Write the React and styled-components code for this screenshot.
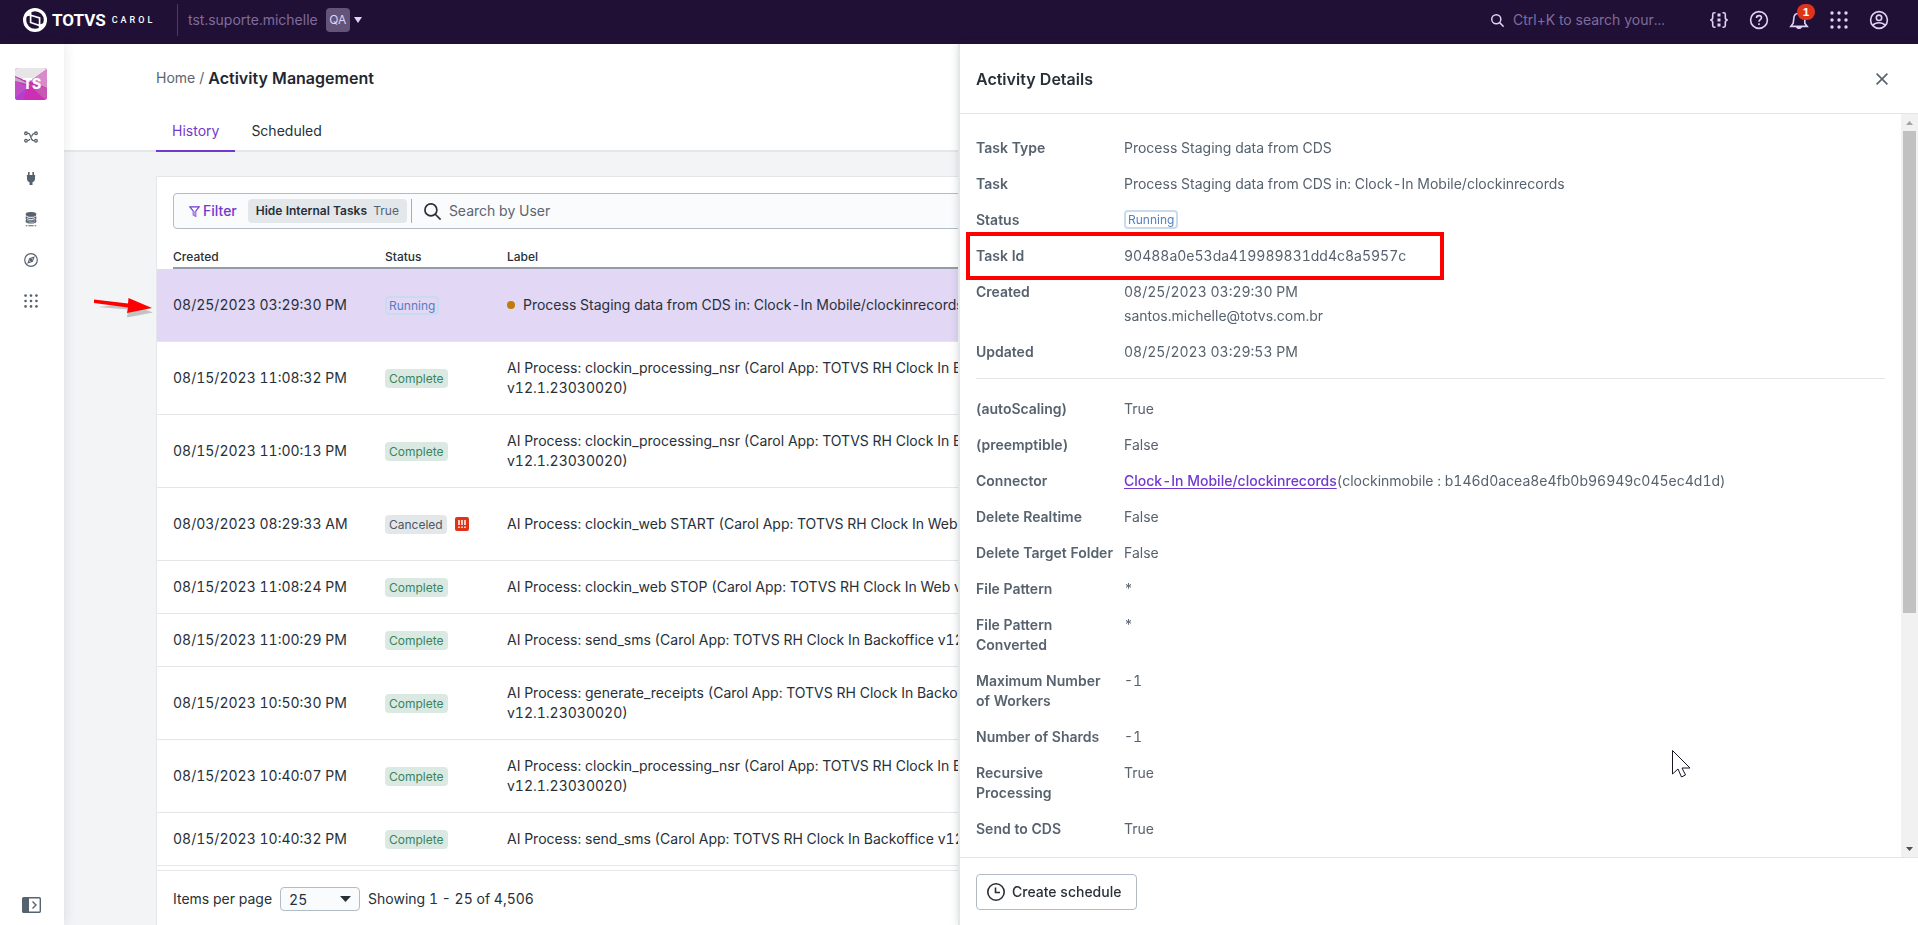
import React, { useState } from "react";
import styled, { createGlobalStyle, css } from "styled-components";

const GlobalStyle = createGlobalStyle`
  * {
    box-sizing: border-box;
  }

  body {
    margin: 0;
    background: #f2f4f6;
    color: #273039;
    font-family: Inter, "Liberation Sans", sans-serif;
    font-size: 14px;
    font-variant-numeric: tabular-nums;
    line-height: 20px;
  }

  button,
  input,
  select {
    font: inherit;
    font-variant-numeric: inherit;
    color: inherit;
  }
`;

const Page = styled.div`
  position: relative;
  display: flex;
  flex-direction: column;
  height: 100vh;
  overflow: hidden;
`;

const TopBar = styled.header`
  display: flex;
  flex: none;
  align-items: center;
  height: 44px;
  padding: 0 19px 4px 23px;
  background: #201036;
  color: #dfd2f6;
`;

const Brand = styled.a`
  display: flex;
  align-items: center;
  width: 154px;
  color: #ffffff;
  text-decoration: none;
`;

const BrandName = styled.span`
  margin-left: 5px;
  font-family: Roboto, sans-serif;
  font-size: 17px;
  font-weight: 700;
`;

const BrandProduct = styled.span`
  margin-left: 6px;
  font-family: Roboto, sans-serif;
  font-size: 9px;
  font-weight: 500;
  letter-spacing: 3px;
`;

const TenantButton = styled.button`
  display: flex;
  align-items: center;
  height: 32px;
  padding: 0 10px;
  border: none;
  border-left: 1px solid #4a3b60;
  background: none;
  color: #7f6c9c;
  cursor: pointer;

  svg {
    margin-left: 4px;
    color: #dfd2f6;
  }
`;

const EnvTag = styled.span`
  width: 24px;
  margin-left: 8px;
  border-radius: 4px;
  background: #64547a;
  color: #dfd2f6;
  font-size: 12px;
  line-height: 24px;
  text-align: center;
`;

const GlobalSearch = styled.label`
  display: flex;
  align-items: center;
  gap: 9px;
  margin-left: auto;
  margin-right: 18px;
`;

const GlobalSearchInput = styled.input`
  width: 168px;
  padding: 0;
  border: none;
  outline: none;
  background: none;

  &::placeholder {
    color: #7f6c9c;
    opacity: 1;
  }
`;

const IconButton = styled.button`
  position: relative;
  display: flex;
  align-items: center;
  justify-content: center;
  width: ${(props) => props.$width ?? 24}px;
  height: 24px;
  padding: 0;
  border: none;
  background: none;
  cursor: pointer;
`;

const TopActions = styled.nav`
  display: flex;
`;

const Notification = styled.span`
  position: absolute;
  top: -4px;
  right: 4px;
  width: 18px;
  border-radius: 8px;
  background: #e0341a;
  color: #ffffff;
  font-size: 11px;
  font-weight: 700;
  line-height: 16px;
  text-align: center;
`;

const Body = styled.div`
  display: flex;
  flex: 1;
  min-height: 0;
`;

const Sidebar = styled.nav`
  z-index: 1;
  display: flex;
  flex: none;
  flex-direction: column;
  align-items: center;
  width: 64px;
  padding: 24px 2px 8px 0;
  background: #ffffff;
  box-shadow: 0 0 12px rgba(32, 41, 50, 0.12);
`;

const SideLink = styled.a`
  display: flex;
  align-items: center;
  justify-content: center;
  width: 32px;
  height: 24px;
  margin-bottom: 17px;
  color: #57626f;

  &:last-child {
    margin: auto 0 0;
  }
`;

const TenantLogo = styled.a`
  width: 32px;
  height: 32px;
  margin-bottom: 25px;
`;

const Content = styled.main`
  display: flex;
  flex: 1;
  flex-direction: column;
  min-width: 0;
`;

const PageHead = styled.div`
  padding: 24px 92px 0;
  border-bottom: 2px solid #e3e7ea;
  background: #ffffff;
`;

const Breadcrumb = styled.div`
  display: flex;
  align-items: center;
  gap: 4px;
  color: #5b6570;

  a {
    color: inherit;
    text-decoration: none;
  }
`;

const PageTitle = styled.h1`
  margin: 0;
  color: #1f2830;
  font-size: 16px;
  font-weight: 600;
  line-height: 20px;
`;

const Tabs = styled.div`
  display: flex;
  margin: 22px 0 -2px;
`;

const Tab = styled.button`
  height: 42px;
  padding: 2px 16px 0;
  border: none;
  border-bottom: 2px solid transparent;
  background: none;
  cursor: pointer;

  ${(props) =>
    props.$active &&
    css`
      border-color: #7239cf;
      color: #7239cf;
    `}
`;

const Card = styled.section`
  display: flex;
  flex: 1;
  flex-direction: column;
  min-height: 0;
  margin: 24px 92px 0;
  border: 1px solid #e3e7ea;
  border-bottom: none;
  background: #ffffff;
`;

const FilterBar = styled.div`
  display: flex;
  flex: none;
  align-items: center;
  height: 36px;
  margin: 16px 16px 0;
  padding: 0 15px;
  border: 1px solid #b2bcc6;
  border-radius: 4px;
  background: #fafbfd;
`;

const FilterButton = styled.button`
  display: flex;
  align-items: center;
  gap: 3px;
  padding: 0;
  border: none;
  background: none;
  color: #7239cf;
  font-weight: 500;
  cursor: pointer;
`;

const FilterChip = styled.span`
  margin: 0 4px 0 11px;
  padding: 0 8px;
  border-radius: 4px;
  background: #e3e7ea;
  color: #57626f;
  font-size: 12px;
  line-height: 24px;

  strong {
    margin-right: 3px;
    color: #273039;
    font-weight: 600;
  }
`;

const UserSearch = styled.label`
  display: flex;
  flex: 1;
  align-items: center;
  gap: 8px;
  height: 24px;
  padding-left: 12px;
  border-left: 1px solid #a3adb7;
`;

const UserSearchInput = styled.input`
  flex: 1;
  padding: 0;
  border: none;
  outline: none;
  background: none;

  &::placeholder {
    color: #5b6570;
    opacity: 1;
  }
`;

const TableArea = styled.div`
  flex: 1;
  min-height: 0;
  overflow: hidden;
`;

const Table = styled.table`
  width: 100%;
  border-collapse: separate;
  border-spacing: 0;
  table-layout: fixed;
`;

const HeadCell = styled.th`
  width: ${(props) => props.$width};
  padding: 0;
  font-size: 12px;
  font-weight: 500;
  text-align: left;

  &:first-child {
    padding-left: 16px;
  }

  div {
    height: 40px;
    padding-top: 18px;
    border-bottom: 2px solid #929da7;
  }
`;

const Row = styled.tr`
  height: ${(props) => (props.$tall ? 73 : 53)}px;
  background: ${(props) => (props.$selected ? "#e2d7f5" : "#ffffff")};
  cursor: pointer;
`;

const Cell = styled.td`
  padding: 0;
  border-bottom: 1px solid #e3e7ea;

  &:first-child {
    padding-left: 16px;
  }
`;

const CellInner = styled.div`
  display: flex;
  align-items: center;
`;

const badgeTones = {
  Complete: css`
    background: #daeae3;
    color: #39845f;
  `,
  Canceled: css`
    background: #e3e7ea;
    color: #4d5762;
  `,
  Running: css`
    border: 2px solid #c9dbef;
    padding: 0 2px;
    color: #5580bf;
    line-height: 15px;
  `,
};

const Badge = styled.span`
  display: inline-block;
  padding: 0 4px;
  border-radius: 4px;
  font-size: 12px;
  line-height: 19px;
  ${(props) => badgeTones[props.$tone]}
`;

const AlertMark = styled.svg`
  margin-left: 8px;
`;

const Dot = styled.span`
  width: 8px;
  height: 8px;
  margin-right: 8px;
  border-radius: 50%;
  background: #c07c08;
`;

const Pager = styled.footer`
  display: flex;
  flex: none;
  align-items: flex-start;
  gap: 8px;
  height: 55px;
  padding: 16px;
  border-top: 1px solid #e3e7ea;
  line-height: 24px;

  label {
    display: flex;
    align-items: center;
    gap: 8px;
  }
`;

const SelectBox = styled.span`
  position: relative;
  display: flex;

  svg {
    position: absolute;
    top: 9px;
    right: 9px;
    pointer-events: none;
  }
`;

const Select = styled.select`
  appearance: none;
  width: 80px;
  height: 24px;
  padding: 0 8px;
  border: 1px solid #b2bcc6;
  border-radius: 4px;
  background: #fafbfd;
`;

const Drawer = styled.aside`
  position: fixed;
  z-index: 2;
  top: 44px;
  right: 0;
  bottom: 0;
  display: flex;
  flex-direction: column;
  width: calc(50% + 1px);
  border-left: 2px solid #e3e7ea;
  background: #ffffff;
  box-shadow: 0 0 8px rgba(32, 41, 50, 0.16);
  color: #57626f;
`;

const DrawerHead = styled.div`
  display: flex;
  flex: none;
  align-items: center;
  justify-content: space-between;
  height: 70px;
  padding: 0 24px 0 16px;
  border-bottom: 1px solid #e3e6e8;

  h2 {
    margin: 0;
    color: #273039;
    font-size: 16px;
    font-weight: 600;
  }
`;

const DrawerBody = styled.div`
  display: flex;
  flex: 1;
  min-height: 0;
`;

const Details = styled.div`
  flex: 1;
  padding: 24px 16px 0;
  overflow: hidden;
`;

const DetailList = styled.dl`
  display: flex;
  flex-direction: column;
  gap: 16px;
  margin: 0;

  & + & {
    margin-top: 16px;
    padding-top: 20px;
    border-top: 1px solid #e3e6e8;
  }
`;

const DetailRow = styled.div`
  position: relative;
  display: grid;
  grid-template-columns: 140px 1fr;
  column-gap: 8px;

  dt {
    font-weight: 600;
  }

  dd {
    display: flex;
    flex-direction: column;
    align-items: flex-start;
    gap: 4px;
    margin: 0;
  }

  a {
    color: #7239cf;
    font-weight: 500;
    text-underline-offset: 2px;
  }
`;

const Outline = styled.span`
  position: absolute;
  top: -14px;
  left: -10px;
  width: 478px;
  height: 48px;
  border: 4px solid #fe0000;
  pointer-events: none;
`;

const Scrollbar = styled.div`
  display: flex;
  flex: none;
  flex-direction: column;
  align-items: center;
  width: 17px;
  background: #f1f1f1;
`;

const ScrollArrow = styled.button`
  display: flex;
  align-items: center;
  justify-content: center;
  width: 17px;
  height: 17px;
  padding: 0;
  border: none;
  background: none;
  color: ${(props) => (props.$muted ? "#a3a3a3" : "#505050")};
`;

const ScrollTrack = styled.div`
  flex: 1;
`;

const ScrollThumb = styled.div`
  width: 13px;
  height: 68%;
  background: #c1c1c1;
`;

const DrawerFoot = styled.div`
  flex: none;
  height: 68px;
  padding: 16px;
  border-top: 1px solid #e3e6e8;
`;

const ScheduleButton = styled.button`
  display: flex;
  align-items: center;
  gap: 7px;
  height: 36px;
  padding: 0 15px 0 10px;
  border: 1px solid #b2bcc6;
  border-radius: 4px;
  background: #ffffff;
  color: #273039;
  font-weight: 500;
  cursor: pointer;
`;

const PointerArrow = styled.svg`
  position: absolute;
  z-index: 1;
  top: 296px;
  left: 92px;
`;

const MouseCursor = styled.svg`
  position: fixed;
  z-index: 3;
  right: 227px;
  bottom: 147px;
  pointer-events: none;
`;

const rows = [
  {
    created: "08/25/2023 03:29:30 PM",
    status: "Running",
    label: "Process Staging data from CDS in: Clock-In Mobile/clockinrecords",
    dot: true,
    tall: true,
  },
  {
    created: "08/15/2023 11:08:32 PM",
    status: "Complete",
    label:
      "AI Process: clockin_processing_nsr (Carol App: TOTVS RH Clock In Backoffice v12.1.23030020)",
    tall: true,
  },
  {
    created: "08/15/2023 11:00:13 PM",
    status: "Complete",
    label:
      "AI Process: clockin_processing_nsr (Carol App: TOTVS RH Clock In Backoffice v12.1.23030020)",
    tall: true,
  },
  {
    created: "08/03/2023 08:29:33 AM",
    status: "Canceled",
    label: "AI Process: clockin_web START (Carol App: TOTVS RH Clock In Web v12)",
    alert: true,
    tall: true,
  },
  {
    created: "08/15/2023 11:08:24 PM",
    status: "Complete",
    label: "AI Process: clockin_web STOP (Carol App: TOTVS RH Clock In Web v12)",
  },
  {
    created: "08/15/2023 11:00:29 PM",
    status: "Complete",
    label: "AI Process: send_sms (Carol App: TOTVS RH Clock In Backoffice v12)",
  },
  {
    created: "08/15/2023 10:50:30 PM",
    status: "Complete",
    label:
      "AI Process: generate_receipts (Carol App: TOTVS RH Clock In Backoffice v12.1.23030020)",
    tall: true,
  },
  {
    created: "08/15/2023 10:40:07 PM",
    status: "Complete",
    label:
      "AI Process: clockin_processing_nsr (Carol App: TOTVS RH Clock In Backoffice v12.1.23030020)",
    tall: true,
  },
  {
    created: "08/15/2023 10:40:32 PM",
    status: "Complete",
    label: "AI Process: send_sms (Carol App: TOTVS RH Clock In Backoffice v12)",
  },
];

const settings = [
  ["(autoScaling)", "True"],
  ["(preemptible)", "False"],
  [
    "Connector",
    <span key="connector">
      <a href="#connector">Clock-In Mobile/clockinrecords</a>
      (clockinmobile : b146d0acea8e4fb0b96949c045ec4d1d)
    </span>,
  ],
  ["Delete Realtime", "False"],
  ["Delete Target Folder", "False"],
  ["File Pattern", "*"],
  ["File Pattern Converted", "*"],
  ["Maximum Number of Workers", "-1"],
  ["Number of Shards", "-1"],
  ["Recursive Processing", "True"],
  ["Send to CDS", "True"],
];

function Caret({ width = 8, height = 6, up }) {
  return (
    <svg width={width} height={height} viewBox="0 0 8 6" preserveAspectRatio="none">
      <path d={up ? "M0 6h8L4 0z" : "M0 0h8L4 6z"} fill="currentColor" />
    </svg>
  );
}

function SearchIcon({ size, stroke }) {
  return (
    <svg width={size} height={size} viewBox="0 0 16 16" fill="none" stroke="currentColor" strokeWidth={stroke}>
      <circle cx="6.5" cy="6.5" r="5.6" />
      <path d="M10.6 10.6l5 5" />
    </svg>
  );
}

function DotsIcon({ size, radius }) {
  const steps = [2, 9, 16];
  return (
    <svg width={size} height={size} viewBox="0 0 18 18" fill="currentColor">
      {steps.map((y) =>
        steps.map((x) => <circle key={`${x}-${y}`} cx={x} cy={y} r={radius} />)
      )}
    </svg>
  );
}

function BrandMark() {
  return (
    <svg width="24" height="24" viewBox="0 0 24 24" fill="none" stroke="#ffffff">
      <circle cx="12" cy="12" r="10.4" strokeWidth="3.2" />
      <path d="M7.600 3.500v11l9 3V10l-9-2.700" strokeWidth="1.700" />
      <path d="M16.600 17.500v3.500" strokeWidth="1.700" />
      <path d="M3 8.500c1-3 3-4.500 5-5.500v4.500zM16.500 21c2-1 3.500-3 4.500-6l-4.500 1.500z" fill="#ffffff" stroke="none" />
    </svg>
  );
}

function BracesIcon() {
  return (
    <svg width="20" height="18" viewBox="0 0 20 18" fill="none" stroke="currentColor" strokeWidth="1.6">
      <path d="M6.5 1.8H5.3c-1 0-1.600.6-1.600 1.600v3.200C3.700 8 3 9 1.200 9c1.800 0 2.500 1 2.500 2.400v3.200c0 1 .6 1.600 1.600 1.600h1.200M13.500 1.800h1.200c1 0 1.600.6 1.600 1.600v3.200c0 1.400.7 2.400 2.500 2.400-1.800 0-2.500 1-2.500 2.400v3.200c0 1-.6 1.600-1.600 1.600h-1.200" />
      <path d="M10 2.500v3M10 7.500v3M10 12.500v3" strokeWidth="3" />
    </svg>
  );
}

function HelpIcon() {
  return (
    <svg width="20" height="20" viewBox="0 0 20 20" fill="none" stroke="currentColor" strokeWidth="1.6">
      <circle cx="10" cy="10" r="8.4" />
      <path d="M7.500 8c0-1.500 1.100-2.400 2.500-2.400s2.500.9 2.500 2.200c0 1.800-2.500 1.900-2.500 4M10 13.200v1.700" />
    </svg>
  );
}

function BellIcon() {
  return (
    <svg width="20" height="20" viewBox="0 0 20 20" fill="none" stroke="currentColor" strokeWidth="1.6">
      <path d="M1.800 16.400h16.400l-2.400-3.200V8.500c0-3-2.400-5.300-5.800-5.300S4.800 5.500 4.800 8.500l-.6 4.700z" />
      <path d="M7 17c.4 1.400 1.500 2 3 2s2.600-.6 3-2z" fill="currentColor" stroke="none" />
    </svg>
  );
}

function UserIcon() {
  return (
    <svg width="20" height="20" viewBox="0 0 20 20" fill="none" stroke="currentColor" strokeWidth="1.6">
      <circle cx="10" cy="10" r="8.4" />
      <circle cx="10" cy="7.8" r="2.7" />
      <path d="M4 15.300c1.300-1.700 3.500-2.500 6-2.500s4.700.8 6 2.500" />
    </svg>
  );
}

function TenantPicture() {
  return (
    <svg width="32" height="32" viewBox="0 0 32 32">
      <defs>
        <clipPath id="tile">
          <rect width="32" height="32" rx="3" />
        </clipPath>
      </defs>
      <g clipPath="url(#tile)">
        <rect width="32" height="32" fill="#cc2fb4" />
        <path d="M0 0h32v1L14 14 0 8z" fill="#e7e5e8" />
        <path d="M32 1v19L15 13z" fill="#d98acb" />
        <path d="M0 9l16 8L0 13z" fill="#bfaec6" />
        <path d="M0 13l14 6L0 30z" fill="#c04fc6" />
        <path d="M32 20v12l-5-3-12-12z" fill="#c458b4" />
        <path d="M0 30l12-10-4 12H0z" fill="#b23fd0" />
        <text x="17" y="21" fill="#ffffff" fontSize="14" fontWeight="800" textAnchor="middle">
          TS
        </text>
      </g>
    </svg>
  );
}

function FlowIcon() {
  return (
    <svg width="14" height="12" viewBox="0 0 14 12" fill="none" stroke="currentColor" strokeWidth="1.3">
      <circle cx="2" cy="2.3" r="1.3" />
      <circle cx="2" cy="9.7" r="1.3" />
      <circle cx="12" cy="2.3" r="1.3" />
      <circle cx="12" cy="9.7" r="1.3" />
      <path d="M3.500 2.300h1c2.500 0 1.800 7.400 5 7.400h1M10.500 2.300C8.500 2.300 8.200 4 7.500 5.500M6 8c-.5 1-1.200 1.700-2.500 1.700" />
    </svg>
  );
}

function PlugIcon() {
  return (
    <svg width="10" height="13" viewBox="0 0 10 13" fill="currentColor">
      <path d="M2 0h1.600v3H2zM6.400 0H8v3H6.400zM.8 3h8.400v1.400H9v2.600c0 1.600-1 2.800-2.500 3.200V13h-3v-2.800C2 9.800 1 8.600 1 7V4.400H.8z" />
    </svg>
  );
}

function StackIcon() {
  return (
    <svg width="12" height="15" viewBox="0 0 12 15" fill="none" stroke="currentColor" strokeWidth="1.1">
      <ellipse cx="6" cy="2.4" rx="4.8" ry="1.8" fill="currentColor" />
      <path d="M1.200 4.600c0 2.400 9.600 2.400 9.600 0v1.800c0 2.400-9.600 2.400-9.600 0zM1.200 8c0 2.400 9.600 2.400 9.600 0v1.500c0 2-9.600 2-9.600 0z" />
      <path d="M.8 13.800h1.600M9.600 13.800h1.600M3.400 13.800h5.200" />
    </svg>
  );
}

function CompassIcon() {
  return (
    <svg width="14" height="14" viewBox="0 0 14 14" fill="none" stroke="currentColor" strokeWidth="1.2">
      <circle cx="7" cy="7" r="6.3" />
      <path d="M9.800 4.200L8.400 8.400 4.200 9.800l1.400-4.200z" />
      <circle cx="7" cy="7" r=".6" />
    </svg>
  );
}

function ExpandIcon() {
  return (
    <svg width="19" height="16" viewBox="0 0 19 16" fill="none" stroke="currentColor" strokeWidth="1.4">
      <rect x=".7" y=".7" width="17.6" height="14.6" rx="1" />
      <path d="M1 1h6v14H1z" fill="currentColor" stroke="none" />
      <path d="M10.500 4.500L14 8l-3.500 3.500" />
    </svg>
  );
}

function FunnelIcon() {
  return (
    <svg width="11" height="11" viewBox="0 0 11 11" fill="none" stroke="currentColor" strokeWidth="1.2">
      <path d="M.8.800h9.400L6.700 5.200v5L4.300 9V5.200z" />
      <path d="M4.300 5.200h2.400v5L4.300 9z" fill="#b79be6" stroke="none" />
    </svg>
  );
}

function ClockIcon() {
  return (
    <svg width="18" height="18" viewBox="0 0 18 18" fill="none" stroke="currentColor" strokeWidth="1.6">
      <circle cx="9" cy="9" r="8.2" />
      <path d="M8.500 4.500v5H13" />
    </svg>
  );
}

function CloseIcon() {
  return (
    <svg width="12" height="12" viewBox="0 0 12 12" fill="none" stroke="#57626f" strokeWidth="1.6">
      <path d="M.6.600l10.800 10.800M11.400.6L.6 11.400" />
    </svg>
  );
}

function Detail({ name, children, outlined }) {
  return (
    <DetailRow>
      <dt>{name}</dt>
      <dd>{children}</dd>
      {outlined && <Outline />}
    </DetailRow>
  );
}

function TopNavigation() {
  return (
    <TopBar>
      <Brand href="#home">
        <BrandMark />
        <BrandName>TOTVS</BrandName>
        <BrandProduct>CAROL</BrandProduct>
      </Brand>
      <TenantButton>
        tst.suporte.michelle
        <EnvTag>QA</EnvTag>
        <Caret />
      </TenantButton>
      <GlobalSearch>
        <SearchIcon size={13} stroke={1.8} />
        <GlobalSearchInput placeholder="Ctrl+K to search your..." aria-label="Search" />
      </GlobalSearch>
      <TopActions>
        <IconButton $width={40} aria-label="Developer">
          <BracesIcon />
        </IconButton>
        <IconButton $width={40} aria-label="Help">
          <HelpIcon />
        </IconButton>
        <IconButton $width={40} aria-label="Notifications">
          <BellIcon />
          <Notification>1</Notification>
        </IconButton>
        <IconButton $width={40} aria-label="Apps">
          <DotsIcon size={18} radius={1.7} />
        </IconButton>
        <IconButton $width={40} aria-label="Account">
          <UserIcon />
        </IconButton>
      </TopActions>
    </TopBar>
  );
}

function SideNavigation() {
  return (
    <Sidebar>
      <TenantLogo href="#tenant">
        <TenantPicture />
      </TenantLogo>
      <SideLink href="#pipelines" aria-label="Pipelines">
        <FlowIcon />
      </SideLink>
      <SideLink href="#connectors" aria-label="Connectors">
        <PlugIcon />
      </SideLink>
      <SideLink href="#models" aria-label="Data models">
        <StackIcon />
      </SideLink>
      <SideLink href="#explore" aria-label="Explore">
        <CompassIcon />
      </SideLink>
      <SideLink href="#apps" aria-label="Apps">
        <DotsIcon size={14} radius={1.7} />
      </SideLink>
      <SideLink href="#expand" aria-label="Expand menu">
        <ExpandIcon />
      </SideLink>
    </Sidebar>
  );
}

function TaskTable({ selected, onSelect }) {
  return (
    <Table>
      <thead>
        <tr>
          <HeadCell $width="228px">
            <div>Created</div>
          </HeadCell>
          <HeadCell $width="122px">
            <div>Status</div>
          </HeadCell>
          <HeadCell $width="34%">
            <div>Label</div>
          </HeadCell>
          <HeadCell $width="auto">
            <div />
          </HeadCell>
        </tr>
      </thead>
      <tbody>
        {rows.map((row, index) => (
          <Row
            key={index}
            $tall={row.tall}
            $selected={index === selected}
            onClick={() => onSelect(index)}
          >
            <Cell>{row.created}</Cell>
            <Cell>
              <CellInner>
                <Badge $tone={row.status}>{row.status}</Badge>
                {row.alert && (
                  <AlertMark width="14" height="14" viewBox="0 0 14 14">
                    <rect width="14" height="14" rx="2" fill="#e0341a" />
                    <path
                      d="M4 3v5M7 3v5M10 3v5M4 9.500V11M7 9.500V11M10 9.500V11"
                      stroke="#ffffff"
                      strokeWidth="1.5"
                    />
                  </AlertMark>
                )}
              </CellInner>
            </Cell>
            <Cell>
              <CellInner>
                {row.dot && <Dot />}
                {row.label}
              </CellInner>
            </Cell>
            <Cell />
          </Row>
        ))}
      </tbody>
    </Table>
  );
}

function ActivityDrawer({ onClose }) {
  return (
    <Drawer>
      <DrawerHead>
        <h2>Activity Details</h2>
        <IconButton onClick={onClose} aria-label="Close">
          <CloseIcon />
        </IconButton>
      </DrawerHead>
      <DrawerBody>
        <Details>
          <DetailList>
            <Detail name="Task Type">Process Staging data from CDS</Detail>
            <Detail name="Task">
              Process Staging data from CDS in: Clock-In Mobile/clockinrecords
            </Detail>
            <Detail name="Status">
              <Badge $tone="Running">Running</Badge>
            </Detail>
            <Detail name="Task Id" outlined>
              90488a0e53da419989831dd4c8a5957c
            </Detail>
            <Detail name="Created">
              <span>08/25/2023 03:29:30 PM</span>
              <span>santos.michelle@totvs.com.br</span>
            </Detail>
            <Detail name="Updated">08/25/2023 03:29:53 PM</Detail>
          </DetailList>
          <DetailList>
            {settings.map(([name, value]) => (
              <Detail key={name} name={name}>
                {value}
              </Detail>
            ))}
          </DetailList>
        </Details>
        <Scrollbar>
          <ScrollArrow $muted aria-label="Scroll up">
            <Caret width={7} height={4} up />
          </ScrollArrow>
          <ScrollTrack>
            <ScrollThumb />
          </ScrollTrack>
          <ScrollArrow aria-label="Scroll down">
            <Caret width={7} height={4} />
          </ScrollArrow>
        </Scrollbar>
      </DrawerBody>
      <DrawerFoot>
        <ScheduleButton>
          <ClockIcon />
          Create schedule
        </ScheduleButton>
      </DrawerFoot>
    </Drawer>
  );
}

function App() {
  const [tab, setTab] = useState("History");
  const [selected, setSelected] = useState(0);

  return (
    <Page>
      <GlobalStyle />
      <TopNavigation />
      <Body>
        <SideNavigation />
        <Content>
          <PageHead>
            <Breadcrumb>
              <a href="#home">Home</a>
              <span>/</span>
              <PageTitle>Activity Management</PageTitle>
            </Breadcrumb>
            <Tabs>
              {["History", "Scheduled"].map((name) => (
                <Tab key={name} $active={tab === name} onClick={() => setTab(name)}>
                  {name}
                </Tab>
              ))}
            </Tabs>
          </PageHead>
          <Card>
            <FilterBar>
              <FilterButton>
                <FunnelIcon />
                Filter
              </FilterButton>
              <FilterChip>
                <strong>Hide Internal Tasks</strong> True
              </FilterChip>
              <UserSearch>
                <SearchIcon size={17} stroke={1.6} />
                <UserSearchInput placeholder="Search by User" aria-label="Search by User" />
              </UserSearch>
            </FilterBar>
            <TableArea>
              <TaskTable selected={selected} onSelect={setSelected} />
            </TableArea>
            <Pager>
              <label>
                Items per page
                <SelectBox>
                  <Select defaultValue="25">
                    <option>10</option>
                    <option>25</option>
                    <option>50</option>
                  </Select>
                  <Caret width={11} height={6} />
                </SelectBox>
              </label>
              <span>Showing 1 - 25 of 4,506</span>
            </Pager>
          </Card>
        </Content>
      </Body>
      {selected !== null && <ActivityDrawer onClose={() => setSelected(null)} />}
      <PointerArrow width="64" height="24" viewBox="0 0 64 24">
        <path d="M6 11l30 2.500-1 8 26-5-24-9z" fill="#000000" opacity="0.2" />
        <path d="M2 3.500l34 4L36.500 2 60 12l-25 5 1-5.500L2 7z" fill="#fe0000" />
      </PointerArrow>
      <MouseCursor width="19" height="28" viewBox="0 0 19 28">
        <path
          d="M.5.500v23.500l5.500-5 3.500 8 4-2-3.500-7h8z"
          fill="#ffffff"
          stroke="#1c1526"
          strokeWidth="1"
        />
      </MouseCursor>
    </Page>
  );
}

export default App;
